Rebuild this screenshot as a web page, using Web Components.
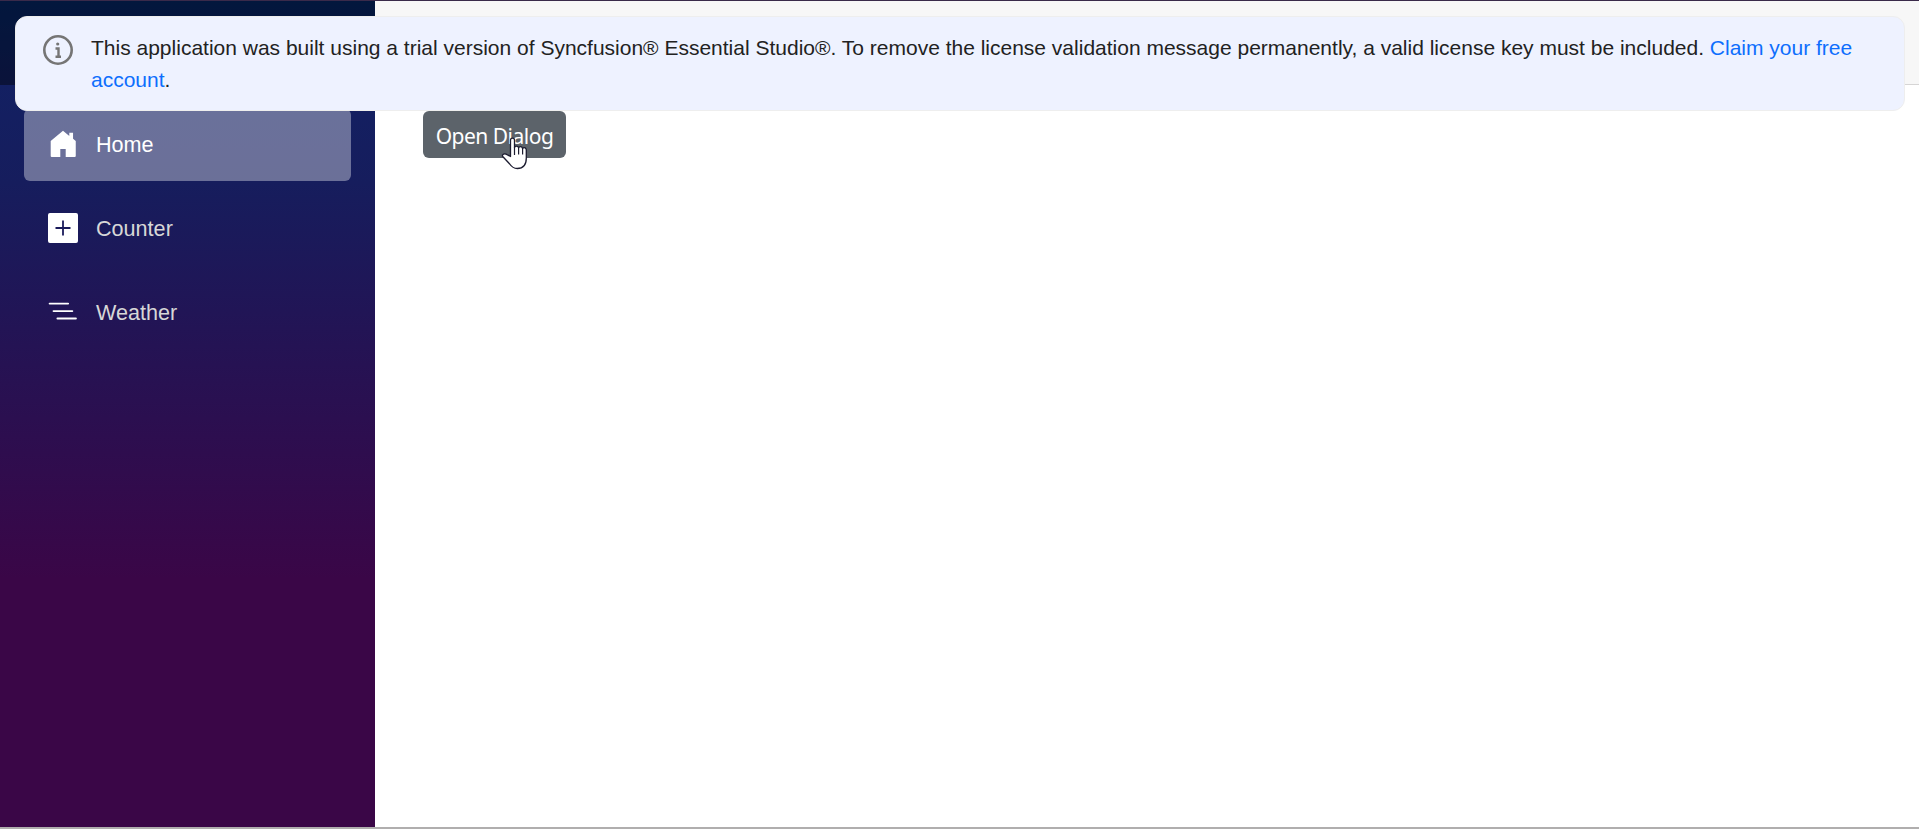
<!DOCTYPE html>
<html lang="en">
<head>
<meta charset="utf-8">
<title>Home</title>
<style>
html,body{margin:0;height:100%;overflow:hidden;background:#fff}
body{font-family:"Liberation Sans",Arial,sans-serif}
</style>
</head>
<body>
<app-shell>
  <side-nav slot="side">
    <nav-item icon="home" active>Home</nav-item>
    <nav-item icon="plus">Counter</nav-item>
    <nav-item icon="list">Weather</nav-item>
  </side-nav>
  <action-button>Open Dialog</action-button>
  <license-banner slot="overlay">This application was built using a trial version of Syncfusion® Essential Studio®. To remove the license validation message permanently, a valid license key must be included. <a>Claim your free</a> <a>account</a><span>.</span></license-banner>
  <hand-pointer slot="overlay"></hand-pointer>
</app-shell>
<script>
function define(name, html, ready) {
  customElements.define(name, class extends HTMLElement {
    constructor() {
      super();
      this.attachShadow({ mode: 'open' }).innerHTML = html;
    }
    connectedCallback() { if (ready) ready(this); }
  });
}

define('app-shell', `
<style>
:host{display:flex;flex-direction:column;box-sizing:border-box;height:829px;border-top:1px solid #3a2a4a;border-bottom:2px solid #b0aeae;position:relative}
.page{flex:1;display:flex;min-height:0}
main{flex:1}
.top{height:83px;background:#f7f7f7;border-bottom:1px solid #d6d5d5}
article{padding:26px 36px 0 48px}
</style>
<div class="page"><slot name="side"></slot><main><div class="top"></div><article><slot></slot></article></main></div>
<slot name="overlay"></slot>`);

define('side-nav', `
<style>
:host{display:block;width:375px;background:linear-gradient(180deg,rgb(5,39,103) 0%,rgb(19,32,98) 10%,rgb(22,29,93) 22%,rgb(33,21,86) 37.5%,#3a0647 70%)}
.top{height:84px;background:rgba(0,0,0,.4)}
nav{display:flex;flex-direction:column;gap:12px;padding:24px 24px 0}
</style>
<div class="top"></div><nav><slot></slot></nav>`);

const icons = {
  home: '<path d="M10 1.200L1.800 8V18Q1.800 18.700 2.500 18.700H8.200V13.300H11.800V18.700H17.800Q18.500 18.700 18.500 18V8L16.700 6.500V2.500H14.200V4.700z"/>',
  plus: '<path d="M1.300 0h17.400Q20 0 20 1.300v17.400q0 1.300-1.300 1.300H1.300Q0 20 0 18.700V1.300Q0 0 1.300 0zm8.100 5v4.400H5v1.200h4.400V15h1.200v-4.400H15V9.400h-4.400V5z"/>',
  list: '<path d="M1.100 4.400h12.300M3.700 9.400h12.500M6.300 14.300h12.300" stroke="#fff" stroke-width="1.300" stroke-linecap="round"/>'
};
define('nav-item', `
<style>
:host{display:flex;align-items:center;box-sizing:border-box;height:72px;padding:0 0 2px 24px;gap:18px;border-radius:6px;color:#d7d7d7;font-size:21.6px;line-height:70px}
:host([active]){background:rgba(255,255,255,.37);color:#fff}
span{padding-top:2px;line-height:68px}
svg{width:30px;height:30px;fill:#fff;flex:none}
</style>
<svg viewBox="0 0 20 20"></svg><span><slot></slot></span>`,
  el => { el.shadowRoot.querySelector('svg').innerHTML = icons[el.getAttribute('icon')]; });

define('action-button', `
<style>
:host{display:inline-block}
button{display:block;box-sizing:border-box;width:143px;height:47px;padding:3px 0 0;border:0;border-radius:6px;background:#5c636a;color:#fff;font:21px/44px "Noto Sans",sans-serif;letter-spacing:-.5px;white-space:nowrap}
</style>
<button><slot></slot></button>`);

define('license-banner', `
<style>
:host{position:absolute;left:15px;top:15px;width:1890px;height:95px;box-sizing:border-box;display:flex;gap:18px;padding:15px 48px 0 27px;border:1px solid #eee;border-radius:12px;background:#eef2ff;color:#222;font-size:21px;line-height:32px}
svg{width:30px;height:30px;margin-top:3px;flex:none}
::slotted(a){color:#0d6efd}
</style>
<svg viewBox="0 0 30 30" fill="none" stroke="#757575"><circle cx="15" cy="15" r="13.700" stroke-width="2.600"/><path d="M12.500 13.500h3v8M12.500 21.700h5.500" stroke-width="2.400"/><circle cx="14.700" cy="9" r="1.600" fill="#757575" stroke="none"/></svg>
<div><slot></slot></div>`);

define('hand-pointer', `
<style>
:host{position:absolute;left:500px;top:135px;line-height:0}
</style>
<svg width="28" height="34" viewBox="0 0 28 34"><path d="M10.500 20.500V4.200Q10.500 2.200 12.500 2.200t2 2V11.500q.4-1.300 2-1.300t2.100 1.700q.4-1.200 1.900-1.200t2.100 1.900q.4-.9 1.800-.9t1.900 2V22c0 7-3.300 10.500-9 10.500-3.500 0-5.600-1.500-7.600-4.500L2.700 20.500q-.8-1.800 1-2.400 1.700-.5 3.400.5z" fill="#fff" stroke="#1c1c30" stroke-width="1.300" stroke-linejoin="round"/><path d="M14.500 11v8M18.600 11.800v6.700M22.600 12.500v6" stroke="#1c1c30" stroke-width="1.200"/></svg>`);
</script>
</body>
</html>
